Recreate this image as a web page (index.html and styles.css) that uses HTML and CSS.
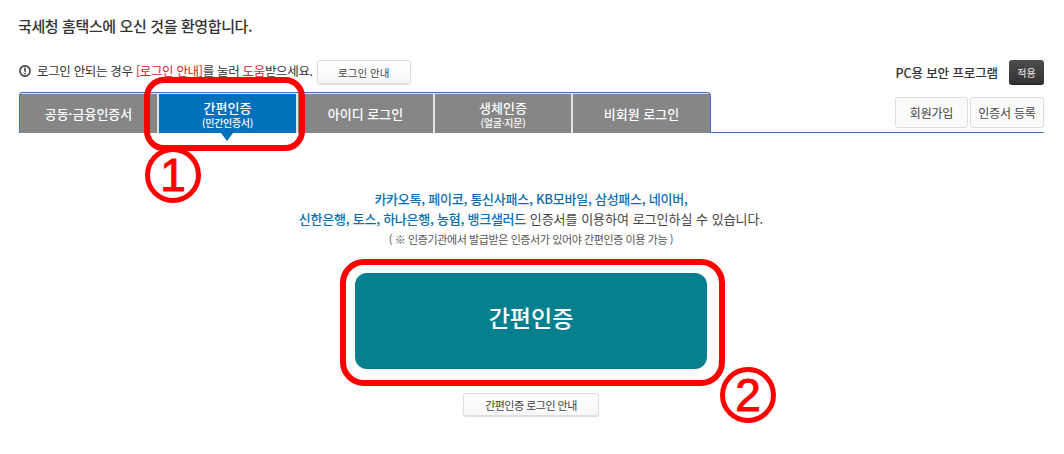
FILE: index.html
```html
<!DOCTYPE html>
<html lang="ko">
<head>
<meta charset="utf-8">
<title>국세청 홈택스</title>
<link rel="stylesheet" href="styles.css">
</head>
<body>
<main class="page">
  <h1 class="title">국세청 홈택스에 오신 것을 환영합니다.</h1>
  <div class="toolbar">
    <p class="notice">
      <svg class="info" width="12" height="12" viewBox="0 0 12 12" aria-hidden="true"><circle cx="6" cy="6" r="5.1" fill="none" stroke="#444" stroke-width="1.6"/><rect x="5.2" y="2.6" width="1.6" height="4.2" fill="#444"/><rect x="5.2" y="7.8" width="1.6" height="1.6" fill="#444"/></svg>
      <span>로그인 안되는 경우 <em class="red">[로그인 안내]</em>를 눌러 <em class="red">도움</em>받으세요.</span>
      <button class="btn btn-guide">로그인 안내</button>
    </p>
    <div class="security">
      <span>PC용 보안 프로그램</span>
      <button class="btn-dark">적용</button>
    </div>
  </div>
  <div class="tabrow">
    <nav class="tabs">
      <a class="tab tab-a">공동·금융인증서</a>
      <a class="tab tab-a active">간편인증<small>(민간인증서)</small></a>
      <a class="tab tab-b">아이디 로그인</a>
      <a class="tab tab-c">생체인증<small>(얼굴·지문)</small></a>
      <a class="tab tab-a">비회원 로그인</a>
    </nav>
    <div class="tabline">
      <button class="btn btn-side">회원가입</button>
      <button class="btn btn-side btn-cert">인증서 등록</button>
    </div>
  </div>
  <section class="content">
    <p class="desc"><strong>카카오톡, 페이코, 통신사패스, KB모바일, 삼성패스, 네이버,</strong></p>
    <p class="desc"><strong>신한은행, 토스, 하나은행, 농협, 뱅크샐러드</strong> 인증서를 이용하여 로그인하실 수 있습니다.</p>
    <p class="note">( ※ 인증기관에서 발급받은 인증서가 있어야 간편인증 이용 가능 )</p>
    <button class="main-btn">간편인증</button>
    <button class="btn btn-help">간편인증 로그인 안내</button>
  </section>
</main>
<div class="mark mark-tab"></div>
<div class="num num-1">1</div>
<div class="mark mark-btn"></div>
<div class="num num-2">2</div>
</body>
</html>
```
FILE: styles.css
```css
* { box-sizing: border-box; }
html, body { margin: 0; background: #fff; }
body {
  position: relative;
  width: 1064px;
  height: 454px;
  overflow: hidden;
  font-family: "Noto Sans CJK KR", "Noto Sans", sans-serif;
  color: #333;
}
button { font-family: inherit; cursor: pointer; padding: 0; }
em { font-style: normal; }
.page { padding: 16px 20px 0 18px; }
.title {
  margin: 0;
  font-size: 15px;
  line-height: 20px;
  font-weight: 500;
  letter-spacing: -0.38px;
  color: #333;
}
.toolbar {
  display: flex;
  justify-content: space-between;
  margin-top: 24px;
  height: 32px;
}
.notice {
  display: flex;
  align-items: center;
  gap: 6px;
  margin: 0;
  height: 21px;
  padding-left: 1px;
  font-size: 12.5px;
  letter-spacing: -0.33px;
  color: #333;
}
.info { flex: none; }
.red { color: #d5232b; }
.btn {
  background: linear-gradient(#fff, #f7f7f7);
  border: 1px solid #ddd;
  border-radius: 3px;
  color: #444;
  box-shadow: 0 1px 1px #ddd;
}
.btn-guide { align-self: flex-start; width: 94px; height: 24px; font-size: 10.5px; margin-left: -2px; }
.security {
  display: flex;
  align-items: center;
  gap: 11px;
  height: 25px;
  font-size: 12.5px;
  font-weight: 500;
  letter-spacing: -0.1px;
}
.btn-dark {
  width: 35px;
  height: 25px;
  border: 0;
  border-radius: 3px;
  background: linear-gradient(#4d4d4d, #333);
  border-bottom: 1px solid #222;
  color: #eee;
  font-size: 10px;
}
.tabrow { display: flex; align-items: stretch; height: 41px; }
.tabs {
  display: flex;
  gap: 2px;
  width: 692px;
  flex: none;
  margin-left: 1px;
  padding-top: 1px;
  border: 1px solid #3c78c0;
  border-bottom: 0;
  border-radius: 4px 4px 0 0;
  background: #e4e4e4;
}
.tab {
  position: relative;
  display: flex;
  flex-direction: column;
  align-items: center;
  justify-content: center;
  padding-bottom: 1px;
  background: #868686;
  color: #fff;
  font-size: 13px;
  line-height: 15px;
  font-weight: 500;
}
.tab-a { flex: 0 0 137px; }
.tab-b { flex: 0 0 135px; }
.tab-c { flex: 0 0 136px; }
.tab small { font-size: 10px; line-height: 15px; margin-bottom: -3px; font-weight: 500; letter-spacing: -0.3px; }
.tab.active { background: #0271bb; }
.tab.active::after {
  content: "";
  position: absolute;
  left: 62px;
  bottom: -8px;
  border: 6px solid transparent;
  border-bottom: 0;
  border-top: 8px solid #0271bb;
}
.tabline {
  flex: 1;
  display: flex;
  justify-content: flex-end;
  gap: 2px;
  padding-top: 5px;
  padding-bottom: 4px;
  border-bottom: 1px solid #3c78c0;
}
.btn-side { width: 73px; height: 31px; font-size: 12px; letter-spacing: -0.2px; background: #fbfbfb; box-shadow: none; }
.btn-cert { width: 74px; }
.content {
  display: flex;
  flex-direction: column;
  align-items: center;
  padding-top: 56px;
}
.desc { margin: 0; font-size: 13px; line-height: 20px; color: #444; }
.desc strong { color: #0a6eb4; font-weight: 500; letter-spacing: -0.25px; }
.note { margin: 0; font-size: 11px; line-height: 20px; color: #555; letter-spacing: -0.4px; }
.main-btn {
  width: 352px;
  height: 96px;
  margin-top: 24px;
  padding-bottom: 8px;
  border: 0;
  border-radius: 12px;
  background: #067f8f;
  color: #fff;
  font-size: 23px;
  font-weight: 500;
}
.btn-help { width: 136px; height: 23px; margin-top: 24px; font-size: 11px; letter-spacing: -0.5px; }
.mark {
  position: absolute;
  border: 6px solid #f00;
  background: transparent;
}
.mark-tab { left: 144px; top: 77px; width: 161px; height: 74px; border-radius: 20px; }
.mark-btn { left: 340px; top: 259px; width: 385px; height: 127px; border-radius: 24px; }
.num {
  position: absolute;
  width: 56px;
  height: 56px;
  border: 5px solid #f00;
  border-radius: 50%;
  display: flex;
  align-items: center;
  justify-content: center;
  font-family: "Liberation Sans", sans-serif;
  font-size: 46px;
  font-weight: 400;
  line-height: 1;
  color: #f00;
  -webkit-text-stroke: 1px #f00;
}
.num-1 { left: 145px; top: 147px; }
.num-2 { left: 720px; top: 367px; }
```
